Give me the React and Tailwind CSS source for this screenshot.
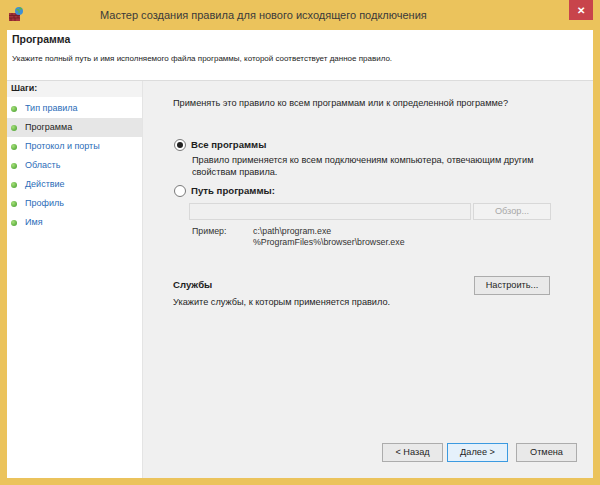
import React from "react";

const steps = [
  "Тип правила",
  "Программа",
  "Протокол и порты",
  "Область",
  "Действие",
  "Профиль",
  "Имя",
];

function WinButton({ children, disabled, focused, className = "" }) {
  return (
    <div
      className={`flex items-center justify-center border text-[9.2px] ${
        focused
          ? "border-[#3c9ae0] bg-[#e5f1fb]"
          : disabled
          ? "border-[#d8d8d8] bg-[#f2f2f2] text-[#a8a8a8]"
          : "border-[#acacac] bg-[#e9e9e9]"
      } ${className}`}
    >
      {children}
    </div>
  );
}

function Radio({ checked }) {
  return (
    <div className="flex h-[12px] w-[12px] shrink-0 items-center justify-center rounded-full border border-[#7a7a7a] bg-white">
      {checked && <div className="h-[6px] w-[6px] rounded-full bg-[#222]" />}
    </div>
  );
}

export default function App() {
  return (
    <div
      className="flex h-[485px] w-[600px] flex-col bg-[#ebc35c] text-[#1e1e1e]"
      style={{ fontFamily: '"Liberation Sans", Arial, sans-serif' }}
    >
      {/* title bar */}
      <div className="relative flex h-[30px] shrink-0 items-center pl-[100px]">
        <svg className="absolute left-[8px] top-[6px]" width="16" height="16" viewBox="0 0 16 16">
          <rect x="1" y="7" width="11" height="8" fill="#a3323a" />
          <path d="M1 9.5h11M1 12h11M4 7v2.5M8 7v2.5M6 9.5V12M10 9.5V12M3 12v3M7 12v3" stroke="#6e1d22" strokeWidth="0.8" />
          <circle cx="11" cy="5" r="4" fill="#3d8fd6" />
          <path d="M8.5 3.5c1 .5 2 0 2.5 1s-.5 2 .5 2.5M12 1.5c0 1 1 1.5 2 1.5" stroke="#5bb544" strokeWidth="1.4" fill="none" />
        </svg>
        <span className="text-[11px] text-[#3a3a3a]">
          Мастер создания правила для нового исходящего подключения
        </span>
        <div className="absolute right-[7px] top-0 flex h-[20px] w-[24px] items-center justify-center bg-[#c8444b] text-[10px] font-bold text-white">
          ✕
        </div>
      </div>

      {/* client area */}
      <div className="mx-[7px] mb-[7px] flex flex-1 flex-col">
        <div className="h-[51px] shrink-0 border-b border-[#dcdcdc] bg-white px-[5px] pt-[3px]">
          <div className="text-[10.5px] font-bold leading-[12px]">Программа</div>
          <div className="mt-[9px] text-[8px] leading-[10px] text-[#222]">
            Укажите полный путь и имя исполняемого файла программы, которой соответствует данное правило.
          </div>
        </div>

        <div className="flex flex-1">
          {/* steps */}
          <div className="w-[136px] shrink-0 border-r border-[#e4e4e4] bg-white">
            <div className="flex h-[16px] items-center bg-[#f3f3f3] px-[4px] text-[9px] font-bold">Шаги:</div>
            <div className="pt-[2px]">
              {steps.map((s, i) => (
                <div
                  key={s}
                  className={`flex h-[19px] items-center gap-[8px] pl-[4px] text-[9px] ${
                    i === 1 ? "bg-[#e6e6e6] text-[#1e1e1e]" : "text-[#2b6cb8]"
                  }`}
                >
                  <div className="h-[6px] w-[6px] rounded-full bg-[radial-gradient(circle_at_35%_35%,#a6e07a,#3f9a28)]" />
                  {s}
                </div>
              ))}
            </div>
          </div>

          {/* main */}
          <div className="flex flex-1 flex-col bg-[#f0f0f0] pl-[30px] pr-[16px] text-[9.2px]">
            <div className="mt-[17px] leading-[11px]">
              Применять это правило ко всем программам или к определенной программе?
            </div>

            <div className="mt-[29px] flex items-center gap-[5px] pl-[1px]">
              <Radio checked />
              <span className="text-[9.6px] font-bold leading-[13px]">Все программы</span>
            </div>
            <div className="mt-[3px] pl-[19px] leading-[12px]">
              Правило применяется ко всем подключениям компьютера, отвечающим другим
              <br />
              свойствам правила.
            </div>

            <div className="mt-[6px] flex items-center gap-[5px] pl-[1px]">
              <Radio />
              <span className="text-[9.6px] font-bold leading-[13px]">Путь программы:</span>
            </div>
            <div className="mt-[6px] flex gap-[2px] pl-[16px]">
              <div className="h-[17px] w-[282px] border border-[#d9d9d9] bg-[#f0f0f0]" />
              <WinButton disabled className="h-[17px] w-[78px]">
                Обзор...
              </WinButton>
            </div>
            <div className="mt-[6px] flex pl-[19px] text-[8.8px] leading-[11px] text-[#333]">
              <div className="w-[61px]">Пример:</div>
              <div>
                c:\path\program.exe
                <br />
                %ProgramFiles%\browser\browser.exe
              </div>
            </div>

            <div className="mt-[28px] flex items-center justify-between pr-[27px]">
              <span className="text-[9.6px] font-bold">Службы</span>
              <WinButton className="h-[19px] w-[76px]">Настроить...</WinButton>
            </div>
            <div className="mt-[2px] leading-[11px]">Укажите службы, к которым применяется правило.</div>

            <div className="mt-auto mb-[16px] flex justify-end gap-[4px]">
              <WinButton className="h-[19px] w-[61px]">&lt; Назад</WinButton>
              <WinButton focused className="mr-[4px] h-[19px] w-[61px]">
                Далее &gt;
              </WinButton>
              <WinButton className="h-[19px] w-[61px]">Отмена</WinButton>
            </div>
          </div>
        </div>
      </div>
    </div>
  );
}
